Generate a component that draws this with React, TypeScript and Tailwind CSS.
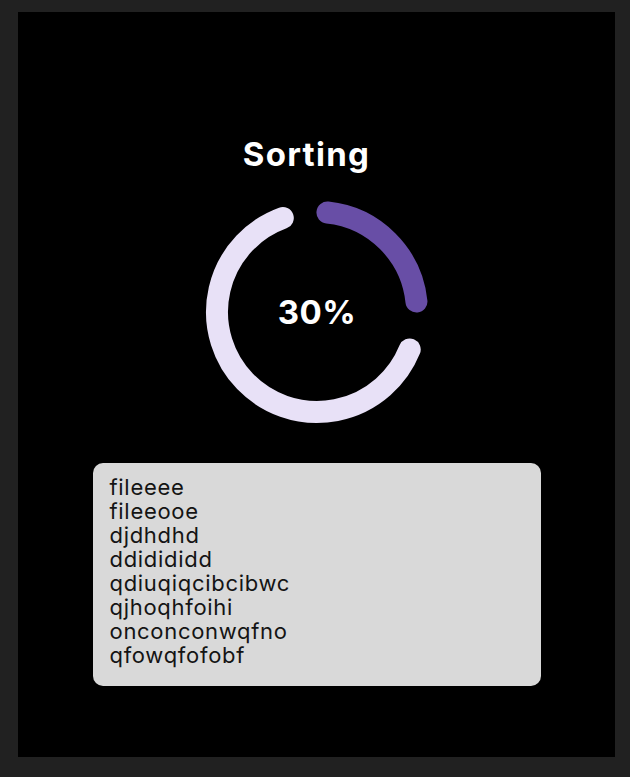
import React from "react";

const files = [
  "fileeee",
  "fileeooe",
  "djdhdhd",
  "ddidididd",
  "qdiuqiqcibcibwc",
  "qjhoqhfoihi",
  "onconconwqfno",
  "qfowqfofobf",
];

function ProgressRing({ percent }: { percent: number }) {
  return (
    <div className="relative h-[240px] w-[240px]">
      <svg width="240" height="240" viewBox="0 0 240 240">
        <path
          d="M 212.72 157.46 A 100 100 0 1 1 85.8 26.03"
          fill="none"
          stroke="#e8e1f7"
          strokeWidth="22"
          strokeLinecap="round"
        />
        <path
          d="M 130.45 20.55 A 100 100 0 0 1 219.45 109.55"
          fill="none"
          stroke="#684ea6"
          strokeWidth="22"
          strokeLinecap="round"
        />
      </svg>
      <div className="absolute inset-0 flex items-center justify-center pl-[1px] text-[33px] font-bold leading-none tracking-[0.5px] text-white">
        {percent}%
      </div>
    </div>
  );
}

export default function App() {
  return (
    <div
      className="min-h-[777px] w-[630px] bg-[#212121] pl-[18px] pt-[12px]"
      style={{ fontFamily: "Inter, 'Noto Sans', sans-serif" }}
    >
      <div className="flex h-[745px] w-[597px] flex-col items-center bg-black">
        <h1 className="mt-[122px] pr-5 text-[33px] font-bold leading-[40px] tracking-[1.3px] text-white">
          Sorting
        </h1>

        <div className="mt-[18px]">
          <ProgressRing percent={30} />
        </div>

        <div className="mt-[31px] h-[223px] w-[448px] rounded-[10px] bg-[#d9d9d9] pl-[17px] pt-[12px]">
          {files.map((file) => (
            <div
              key={file}
              className="text-[22px] leading-[24px] tracking-[0.7px] text-[#141414]"
            >
              {file}
            </div>
          ))}
        </div>
      </div>
    </div>
  );
}
